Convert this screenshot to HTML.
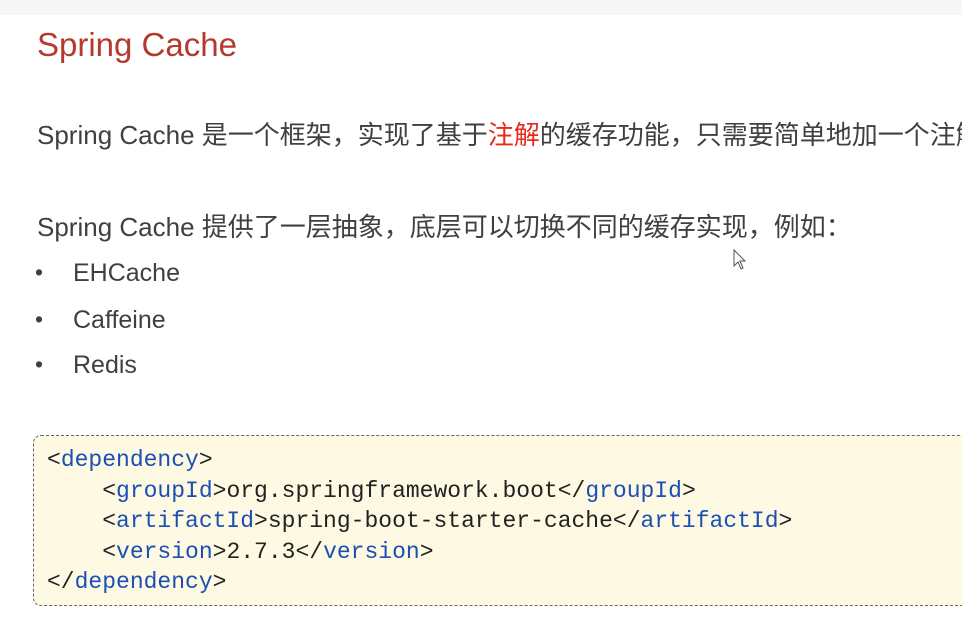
<!DOCTYPE html>
<html><head><meta charset="utf-8"><style>
html,body{margin:0;width:962px;height:620px;overflow:hidden}
body{background:#fff;position:relative;font-family:"Liberation Sans","Noto Sans CJK SC",sans-serif;color:#404040}
.wrap{position:absolute;left:0;top:0;width:962px;height:620px;overflow:hidden}
.top{position:absolute;left:0;top:0;width:962px;height:15px;background:#f6f6f6}
.t{position:absolute;white-space:nowrap}
h1{position:absolute;left:37px;top:23px;margin:0;font-weight:normal;font-size:33px;color:#b5392c;line-height:44px}
.p{font-size:26px;line-height:32px}
.b{font-size:25px;line-height:32px}
.d{font-size:23px;line-height:32px}
.code{position:absolute;left:33px;top:435px;width:960px;height:171px;background:#fdf9e3;border:1px dashed #666;border-radius:8px;box-sizing:border-box}
pre{position:absolute;left:47px;top:445px;margin:0;font-family:"Liberation Mono",monospace;font-size:23px;line-height:30.6px;color:#222}
.k{color:#1c4fb4}
</style></head><body><div class="wrap">
<div class="top"></div>
<h1>Spring Cache</h1>
<div class="t p" style="left:37px;top:119px">Spring Cache 是一个框架，实现了基于<span style="color:#e8291b">注解</span>的缓存功能，只需要简单地加一个注解</div>
<div class="t p" style="left:37px;top:211px">Spring Cache 提供了一层抽象，底层可以切换不同的缓存实现，例如：</div>
<div class="t d" style="left:35px;top:256px">•</div><div class="t b" style="left:73px;top:257px">EHCache</div>
<div class="t d" style="left:35px;top:303px">•</div><div class="t b" style="left:73px;top:304px">Caffeine</div>
<div class="t d" style="left:35px;top:348px">•</div><div class="t b" style="left:73px;top:349px">Redis</div>
<svg style="position:absolute;left:733px;top:249px" width="14" height="22" viewBox="0 0 14 22"><path d="M1 1 L1 17 L5 13 L8 20 L10 19 L7 12 L12 12 Z" fill="#fff" stroke="#555" stroke-width="1"/></svg>
<div class="code"></div>
<pre>&lt;<span class="k">dependency</span>&gt;
    &lt;<span class="k">groupId</span>&gt;org.springframework.boot&lt;/<span class="k">groupId</span>&gt;
    &lt;<span class="k">artifactId</span>&gt;spring-boot-starter-cache&lt;/<span class="k">artifactId</span>&gt;
    &lt;<span class="k">version</span>&gt;2.7.3&lt;/<span class="k">version</span>&gt;
&lt;/<span class="k">dependency</span>&gt;</pre>
</div></body></html>
